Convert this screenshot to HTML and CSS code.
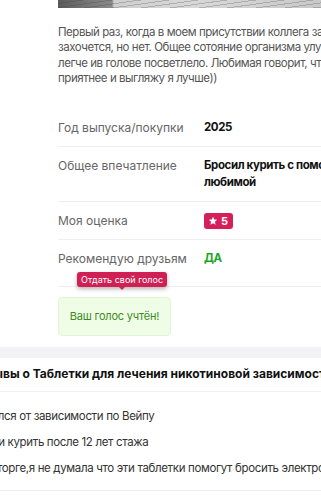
FILE: index.html
```html
<!DOCTYPE html>
<html lang="ru">
<head>
    <meta charset="UTF-8">
    <meta name="viewport" content="width=device-width, initial-scale=1.0">
    <title>Отзыв</title>
    <link rel="stylesheet" href="styles.css">
</head>
<body>
    <div class="page">
        <div class="review">
            <div class="photo"></div>
            <p class="review-text">
                Первый раз, когда в моем присутствии коллега закурил, я думал, что мне тоже<br>
                захочется, но нет. Общее сотояние организма улучшилось, дышать стало<br>
                легче ив голове посветлело. Любимая говорит, что от меня теперь пахнет<br>
                приятнее и выгляжу я лучше))
            </p>

            <table class="specs">
                <tr>
                    <td class="label">Год выпуска/покупки</td>
                    <td class="value">2025</td>
                </tr>
                <tr>
                    <td class="label">Общее впечатление</td>
                    <td class="value">Бросил курить с помощью этих таблеток вместе с<br>любимой</td>
                </tr>
                <tr>
                    <td class="label">Моя оценка</td>
                    <td class="value">
                        <span class="rating">
                            <svg width="10" height="10" viewBox="0 0 24 24"><path d="M12 2l2.9 6.6 7.1.6-5.4 4.7 1.6 7.1L12 17.3 5.8 21l1.6-7.1L2 9.2l7.1-.6z" fill="#fff"/></svg>
                            5
                        </span>
                    </td>
                </tr>
                <tr>
                    <td class="label">Рекомендую друзьям</td>
                    <td class="value yes">ДА</td>
                </tr>
            </table>

            <div class="vote">
                <span class="tooltip">Отдать свой голос</span>
                <div class="vote-done">Ваш голос учтён!</div>
            </div>
        </div>

        <div class="band"></div>

        <div class="more">
            <h2>Отзывы о Таблетки для лечения никотиновой зависимости</h2>
            <ul class="more-list">
                <li>Избавился от зависимости по Вейпу</li>
                <li>Бросили курить после 12 лет стажа</li>
                <li>Я в восторге,я не думала что эти таблетки помогут бросить электронку</li>
            </ul>
        </div>
    </div>
</body>
</html>
```

FILE: styles.css
```css
html {
    overflow: hidden;
}
body {
    margin: 0;
    font-family: Inter, "Noto Sans", sans-serif;
    background-color: #fff;
    color: #111;
}
.page {
    width: 900px;
    margin-left: -44px;
}
.review {
    padding-left: 102px;
}
.photo {
    height: 8px;
    background:
        repeating-linear-gradient(-8deg, transparent 0 3px, rgba(60,60,60,0.25) 3px 4px),
        linear-gradient(90deg, #5a5a5a 0, #777 30px, #8a8a8a 54px, #cfcfcf 56px, #d8d8d8 140px, #c9c9c9 260px, #d4d4d4 100%);
}
.review-text {
    margin: 17px 0 0;
    font-size: 11.5px;
    letter-spacing: -0.45px;
    line-height: 15.4px;
    color: #555;
    white-space: nowrap;
}
.specs {
    margin-top: 22px;
    width: 700px;
    border-collapse: collapse;
    font-size: 12px;
}
.specs td {
    padding: 10px 0;
    line-height: 17px;
    vertical-align: top;
    border-bottom: 1px solid #efefef;
}
.specs tr:last-child td {
    border-bottom: none;
    padding-bottom: 19px;
}
.specs .label {
    width: 146px;
    color: #666;
}
.specs .value {
    font-size: 11.5px;
    letter-spacing: -0.4px;
    font-weight: 700;
    color: #111;
}
.specs .yes {
    color: #1fa51f;
}
.rating {
    display: inline-flex;
    align-items: center;
    gap: 3px;
    height: 16px;
    padding: 0 5px 0 4px;
    margin-top: 1px;
    background-color: #d41f5b;
    border-radius: 3px;
    color: #fff;
    font-size: 11px;
    letter-spacing: 0;
    line-height: 16px;
    vertical-align: top;
}
.vote {
    position: relative;
    border-top: 1px solid #efefef;
    padding: 10px 0 11px;
}
.tooltip {
    position: absolute;
    left: 19px;
    top: -15px;
    padding: 0 4px;
    height: 15px;
    line-height: 15px;
    font-size: 9px;
    color: #fff;
    background-color: #d01f55;
    border-radius: 3px;
    box-shadow: 0 2px 4px rgba(0,0,0,0.3);
    white-space: nowrap;
}
.tooltip::after {
    content: "";
    position: absolute;
    left: 50%;
    bottom: -3px;
    margin-left: -3px;
    border-left: 3px solid transparent;
    border-right: 3px solid transparent;
    border-top: 3px solid #d01f55;
}
.vote-done {
    width: 111px;
    height: 37px;
    line-height: 37px;
    text-align: center;
    font-size: 11px;
    letter-spacing: -0.2px;
    color: #3f8a1f;
    background-color: #effde6;
    border: 1px solid #e0f6d2;
    border-radius: 4px;
}
.band {
    height: 11px;
    background-color: #f2f2f4;
}
.more h2 {
    margin: 0;
    padding: 7px 0 8px 16px;
    font-size: 12px;
    line-height: 18px;
    color: #111;
    border-bottom: 1px solid #f0f0f0;
    white-space: nowrap;
}
.more-list {
    list-style: none;
    margin: 0;
    padding: 11px 0 9px 3px;
    border-bottom: 1px solid #f0f0f0;
}
.more-list li {
    font-size: 11.5px;
    letter-spacing: -0.35px;
    line-height: 26px;
    color: #333;
    white-space: nowrap;
}
```
